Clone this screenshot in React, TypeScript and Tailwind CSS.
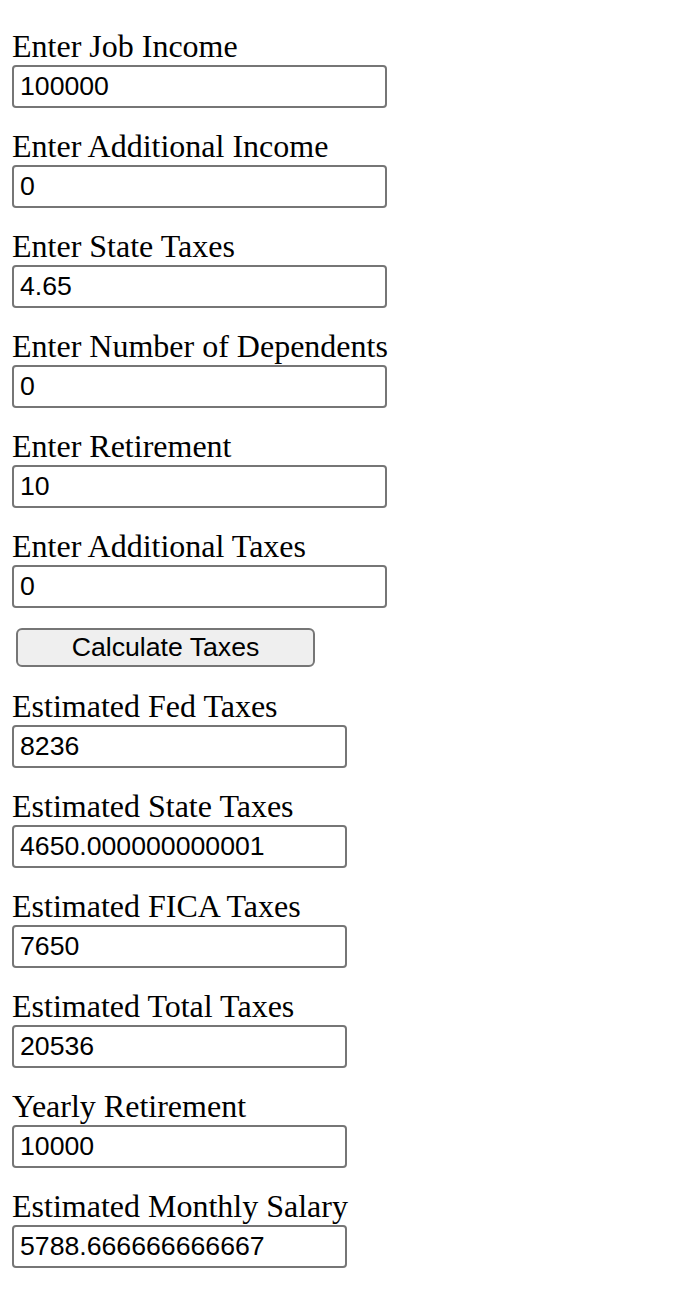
const inputs = [
  { label: 'Enter Job Income', value: '100000' },
  { label: 'Enter Additional Income', value: '0' },
  { label: 'Enter State Taxes', value: '4.65' },
  { label: 'Enter Number of Dependents', value: '0' },
  { label: 'Enter Retirement', value: '10' },
  { label: 'Enter Additional Taxes', value: '0' },
];

const results = [
  { label: 'Estimated Fed Taxes', value: '8236' },
  { label: 'Estimated State Taxes', value: '4650.000000000001' },
  { label: 'Estimated FICA Taxes', value: '7650' },
  { label: 'Estimated Total Taxes', value: '20536' },
  { label: 'Yearly Retirement', value: '10000' },
  { label: 'Estimated Monthly Salary', value: '5788.666666666667' },
];

const Field = ({ label, value, wide }: { label: string; value: string; wide?: boolean }) => (
  <div className="flex flex-col items-start mb-[20px]">
    <label className="font-['Liberation_Serif',serif] text-[32px] leading-[36px] text-black">{label}</label>
    <input
      type="text"
      defaultValue={value}
      className={`mt-[1px] h-[43px] ${wide ? 'w-[375px]' : 'w-[335px]'} border-2 border-[#767676] rounded-[4px] bg-white pl-[6px] pr-[4px] font-['Liberation_Sans',Arial,sans-serif] text-[26.67px] text-black outline-none`}
    />
  </div>
);

const App = () => {
  return (
    <div className="min-h-screen bg-white pt-[28px] pl-[12px]">
      {inputs.map((f) => (
        <Field key={f.label} label={f.label} value={f.value} wide />
      ))}

      <button
        type="button"
        className="ml-[4px] mb-[21px] block h-[39px] w-[299px] border-2 border-[#767676] rounded-[6px] bg-[#efefef] font-['Liberation_Sans',Arial,sans-serif] text-[26.67px] leading-none text-black"
      >
        Calculate Taxes
      </button>

      {results.map((f) => (
        <Field key={f.label} label={f.label} value={f.value} />
      ))}
    </div>
  );
};

export default App;
